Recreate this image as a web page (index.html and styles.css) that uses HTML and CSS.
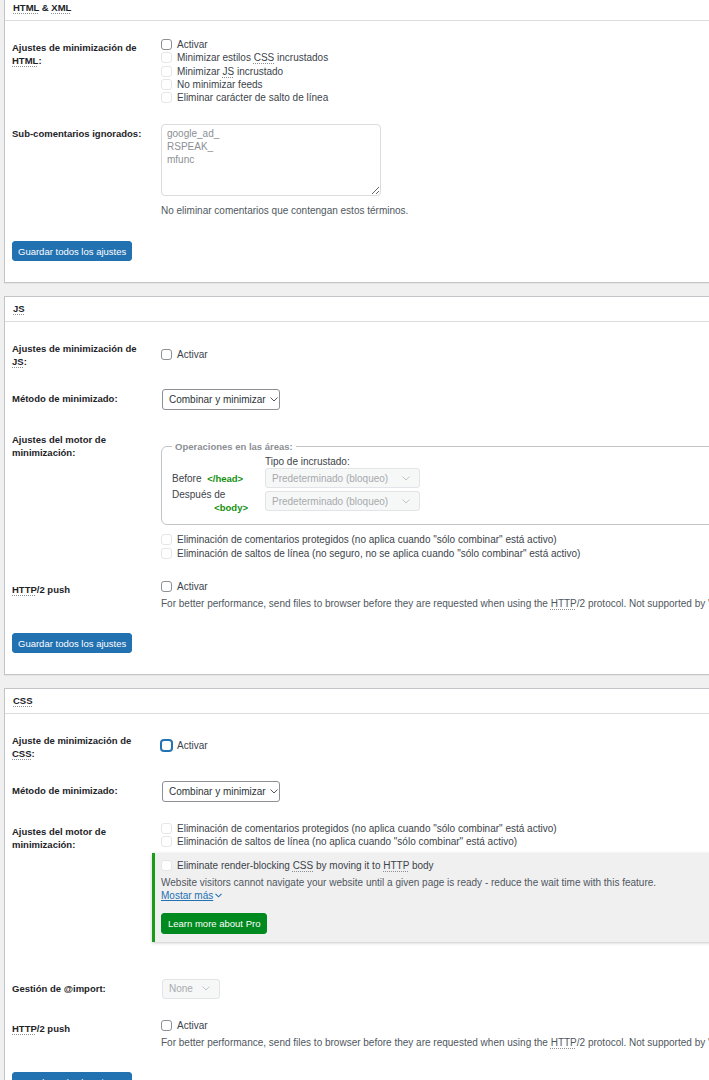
FILE: index.html
```html
<!DOCTYPE html>
<html lang="es">
<head>
    <meta charset="UTF-8">
    <meta name="viewport" content="width=device-width, initial-scale=1.0">
    <title>Minify</title>
    <link rel="stylesheet" href="styles.css">
</head>
<body>
    <div class="wrap">
        <!-- HTML & XML -->
        <div class="postbox">
            <h3 class="postbox-header"><abbr>HTML</abbr> &amp; <abbr>XML</abbr></h3>
            <div class="inside">
                <div class="form-table">
                    <div class="form-row">
                        <div class="th">Ajustes de minimización de <abbr>HTML</abbr>:</div>
                        <div class="td">
                            <label class="check"><span class="box"></span>Activar</label>
                            <label class="check"><span class="box disabled"></span>Minimizar estilos <abbr>CSS</abbr> incrustados</label>
                            <label class="check"><span class="box disabled"></span>Minimizar <abbr>JS</abbr> incrustado</label>
                            <label class="check"><span class="box disabled"></span>No minimizar feeds</label>
                            <label class="check"><span class="box disabled"></span>Eliminar carácter de salto de línea</label>
                        </div>
                    </div>
                    <div class="form-row">
                        <div class="th">Sub-comentarios ignorados:</div>
                        <div class="td">
                            <textarea class="comments" readonly>google_ad_
RSPEAK_
mfunc</textarea>
                            <p class="description">No eliminar comentarios que contengan estos términos.</p>
                        </div>
                    </div>
                </div>
                <div class="submit"><button class="button-primary">Guardar todos los ajustes</button></div>
            </div>
        </div>

        <!-- JS -->
        <div class="postbox">
            <h3 class="postbox-header"><abbr>JS</abbr></h3>
            <div class="inside">
                <div class="form-table">
                    <div class="form-row">
                        <div class="th">Ajustes de minimización de <abbr>JS</abbr>:</div>
                        <div class="td">
                            <label class="check"><span class="box"></span>Activar</label>
                        </div>
                    </div>
                    <div class="form-row">
                        <div class="th">Método de minimizado:</div>
                        <div class="td">
                            <div class="select">Combinar y minimizar
                                <svg width="8" height="5" viewBox="0 0 8 5"><polyline points="0.5,0.5 4,4 7.5,0.5" fill="none" stroke="#50575e" stroke-width="1"/></svg>
                            </div>
                        </div>
                    </div>
                    <div class="form-row">
                        <div class="th">Ajustes del motor de minimización:</div>
                        <div class="td">
                            <fieldset class="areas">
                                <legend>Operaciones en las áreas:</legend>
                                <div class="areas-grid">
                                    <span></span>
                                    <span>Tipo de incrustado:</span>
                                    <span>Before <code>&lt;/head&gt;</code></span>
                                    <div class="select disabled wide">Predeterminado (bloqueo)
                                        <svg width="8" height="5" viewBox="0 0 8 5"><polyline points="0.5,0.5 4,4 7.5,0.5" fill="none" stroke="#c3c4c7" stroke-width="1"/></svg>
                                    </div>
                                    <span>Después de<code class="tag-block">&lt;body&gt;</code></span>
                                    <div class="select disabled wide">Predeterminado (bloqueo)
                                        <svg width="8" height="5" viewBox="0 0 8 5"><polyline points="0.5,0.5 4,4 7.5,0.5" fill="none" stroke="#c3c4c7" stroke-width="1"/></svg>
                                    </div>
                                </div>
                            </fieldset>
                            <div class="after-fieldset">
                                <label class="check"><span class="box disabled"></span>Eliminación de comentarios protegidos (no aplica cuando "sólo combinar" está activo)</label>
                                <label class="check"><span class="box disabled"></span>Eliminación de saltos de línea (no seguro, no se aplica cuando "sólo combinar" está activo)</label>
                            </div>
                        </div>
                    </div>
                    <div class="form-row">
                        <div class="th"><abbr>HTTP</abbr>/2 push</div>
                        <div class="td">
                            <label class="check"><span class="box"></span>Activar</label>
                            <p class="description push">For better performance, send files to browser before they are requested when using the <abbr>HTTP</abbr>/2 protocol. Not supported by "Disk: Enhanced" page cache method for Nginx</p>
                        </div>
                    </div>
                </div>
                <div class="submit"><button class="button-primary">Guardar todos los ajustes</button></div>
            </div>
        </div>

        <!-- CSS -->
        <div class="postbox">
            <h3 class="postbox-header"><abbr>CSS</abbr></h3>
            <div class="inside">
                <div class="form-table">
                    <div class="form-row">
                        <div class="th">Ajuste de minimización de <abbr>CSS</abbr>:</div>
                        <div class="td">
                            <label class="check"><span class="box focus"></span>Activar</label>
                        </div>
                    </div>
                    <div class="form-row">
                        <div class="th">Método de minimizado:</div>
                        <div class="td">
                            <div class="select">Combinar y minimizar
                                <svg width="8" height="5" viewBox="0 0 8 5"><polyline points="0.5,0.5 4,4 7.5,0.5" fill="none" stroke="#50575e" stroke-width="1"/></svg>
                            </div>
                        </div>
                    </div>
                    <div class="form-row">
                        <div class="th">Ajustes del motor de minimización:</div>
                        <div class="td">
                            <label class="check"><span class="box disabled"></span>Eliminación de comentarios protegidos (no aplica cuando "sólo combinar" está activo)</label>
                            <label class="check"><span class="box disabled"></span>Eliminación de saltos de línea (no aplica cuando "sólo combinar" está activo)</label>
                            <div class="pro-box">
                                <label class="check"><span class="box disabled"></span>Eliminate render-blocking <abbr>CSS</abbr> by moving it to <abbr>HTTP</abbr> body</label>
                                <p class="pro-text">Website visitors cannot navigate your website until a given page is ready - reduce the wait time with this feature.</p>
                                <a href="#" class="more-link">Mostar más<svg width="7" height="5" viewBox="0 0 7 5"><polyline points="0.5,0.8 3.5,3.8 6.5,0.8" fill="none" stroke="#2271b1" stroke-width="1.1"/></svg></a>
                                <div><button class="button-pro">Learn more about Pro</button></div>
                            </div>
                        </div>
                    </div>
                    <div class="form-row">
                        <div class="th">Gestión de @import:</div>
                        <div class="td">
                            <div class="select disabled small">None
                                <svg width="8" height="5" viewBox="0 0 8 5"><polyline points="0.5,0.5 4,4 7.5,0.5" fill="none" stroke="#c3c4c7" stroke-width="1"/></svg>
                            </div>
                        </div>
                    </div>
                    <div class="form-row">
                        <div class="th"><abbr>HTTP</abbr>/2 push</div>
                        <div class="td">
                            <label class="check"><span class="box"></span>Activar</label>
                            <p class="description push">For better performance, send files to browser before they are requested when using the <abbr>HTTP</abbr>/2 protocol. Not supported by "Disk: Enhanced" page cache method for Nginx</p>
                        </div>
                    </div>
                </div>
                <div class="submit"><button class="button-primary">Guardar todos los ajustes</button></div>
            </div>
        </div>
    </div>
</body>
</html>
```

FILE: styles.css
```css
body {
    margin: 0;
    background: #f0f0f1;
    font-family: "Liberation Sans", Arial, sans-serif;
    font-size: 10px;
    line-height: 13px;
    color: #3c434a;
    overflow: hidden;
}

.wrap {
    width: 900px;
    margin: -5px 0 0 4px;
}

abbr {
    text-decoration: underline dotted #8c8f94;
    text-underline-offset: 2px;
}

.postbox {
    background: white;
    border: 1px solid #c3c4c7;
    margin-bottom: 13px;
    box-shadow: 0 1px 1px rgba(0,0,0,0.04);
}

.postbox-header {
    margin: 0;
    height: 24px;
    line-height: 24px;
    padding: 0 8px;
    border-bottom: 1px solid #dcdcde;
    font-size: 9.5px;
    font-weight: bold;
    color: #1d2327;
}

.inside {
    padding: 0 7px 21px;
}

.form-table {
    margin-top: 7px;
}

.form-row {
    display: grid;
    grid-template-columns: 149px 1fr;
}

.th {
    align-self: start;
    padding: 13px 10px 11px 0;
    font-size: 9.5px;
    font-weight: bold;
    color: #1d2327;
}

.td {
    align-self: center;
    padding: 10px 0;
}

.check {
    display: block;
    line-height: 13.25px;
    white-space: nowrap;
}

.box {
    display: inline-block;
    width: 9px;
    height: 9px;
    border: 1px solid #8c8f94;
    border-radius: 3px;
    background: white;
    margin-right: 5px;
    vertical-align: -2px;
}

.box.disabled {
    border-color: #e6e6e8;
}

.box.focus {
    border-color: #2271b1;
    box-shadow: 0 0 0 1px #2271b1;
}

.comments {
    display: block;
    box-sizing: border-box;
    width: 220px;
    height: 72px;
    margin: 0;
    padding: 2px 5px;
    border: 1px solid #dcdcde;
    border-radius: 4px;
    font-family: inherit;
    font-size: 10px;
    line-height: 13px;
    color: #8c8f94;
    resize: vertical;
    outline: none;
}

.description {
    margin: 8px 0 0;
    color: #50575e;
}

.description.push {
    margin: 4px 0 -1px;
    white-space: nowrap;
}

.submit {
    margin-top: 14px;
}

.button-primary {
    height: 20px;
    padding: 0 5px;
    font-family: inherit;
    font-size: 9.5px;
    color: white;
    background: #2271b1;
    border: 1px solid #2271b1;
    border-radius: 3px;
    cursor: pointer;
}

.select {
    display: inline-flex;
    align-items: center;
    justify-content: space-between;
    box-sizing: border-box;
    width: 118px;
    height: 21px;
    margin-left: 1px;
    padding: 0 6px;
    border: 1px solid #8c8f94;
    border-radius: 3px;
    background: white;
    color: #2c3338;
    white-space: nowrap;
}

.select svg {
    flex-shrink: 0;
    margin-left: 4px;
}

.select.disabled {
    background: #f6f7f7;
    border-color: #e2e4e7;
    color: #a7aaad;
    height: 20px;
}

.select.wide {
    width: 155px;
    margin-left: 0;
    padding-right: 9px;
}

.select.small {
    width: 58px;
    padding-right: 9px;
}

.areas {
    margin: 10px 0 0;
    padding: 2px 10px 10px;
    border: 1px solid #c3c4c7;
    border-radius: 6px;
}

.areas legend {
    padding: 0 3px;
    font-size: 9.5px;
    font-weight: bold;
    color: #8c8f94;
}

.areas-grid {
    display: grid;
    grid-template-columns: 93px 155px;
    row-gap: 0;
    align-items: center;
}

code {
    font-family: inherit;
    font-size: 9.5px;
    font-weight: bold;
    color: #14900f;
    margin-left: 3px;
}

.tag-block {
    display: block;
    text-align: right;
    padding-right: 17px;
}

.after-fieldset {
    margin-top: 8px;
}

.pro-box {
    margin: 4px 0 17px -9px;
    padding: 6px 9px 8px 6px;
    background: #f0f0f1;
    border-left: 3px solid #1a9c1a;
    box-shadow: 0 1px 3px rgba(0,0,0,0.22);
}

.pro-text {
    margin: 4px 0 0;
    color: #50575e;
}

.more-link {
    color: #2271b1;
    text-decoration: underline;
}

.more-link svg {
    margin-left: 2px;
    vertical-align: 1px;
}

.button-pro {
    margin-top: 11px;
    height: 21px;
    padding: 0 6px;
    font-family: inherit;
    font-size: 9.5px;
    color: white;
    background: #008a20;
    border: 1px solid #008a20;
    border-radius: 3px;
    cursor: pointer;
}
```
